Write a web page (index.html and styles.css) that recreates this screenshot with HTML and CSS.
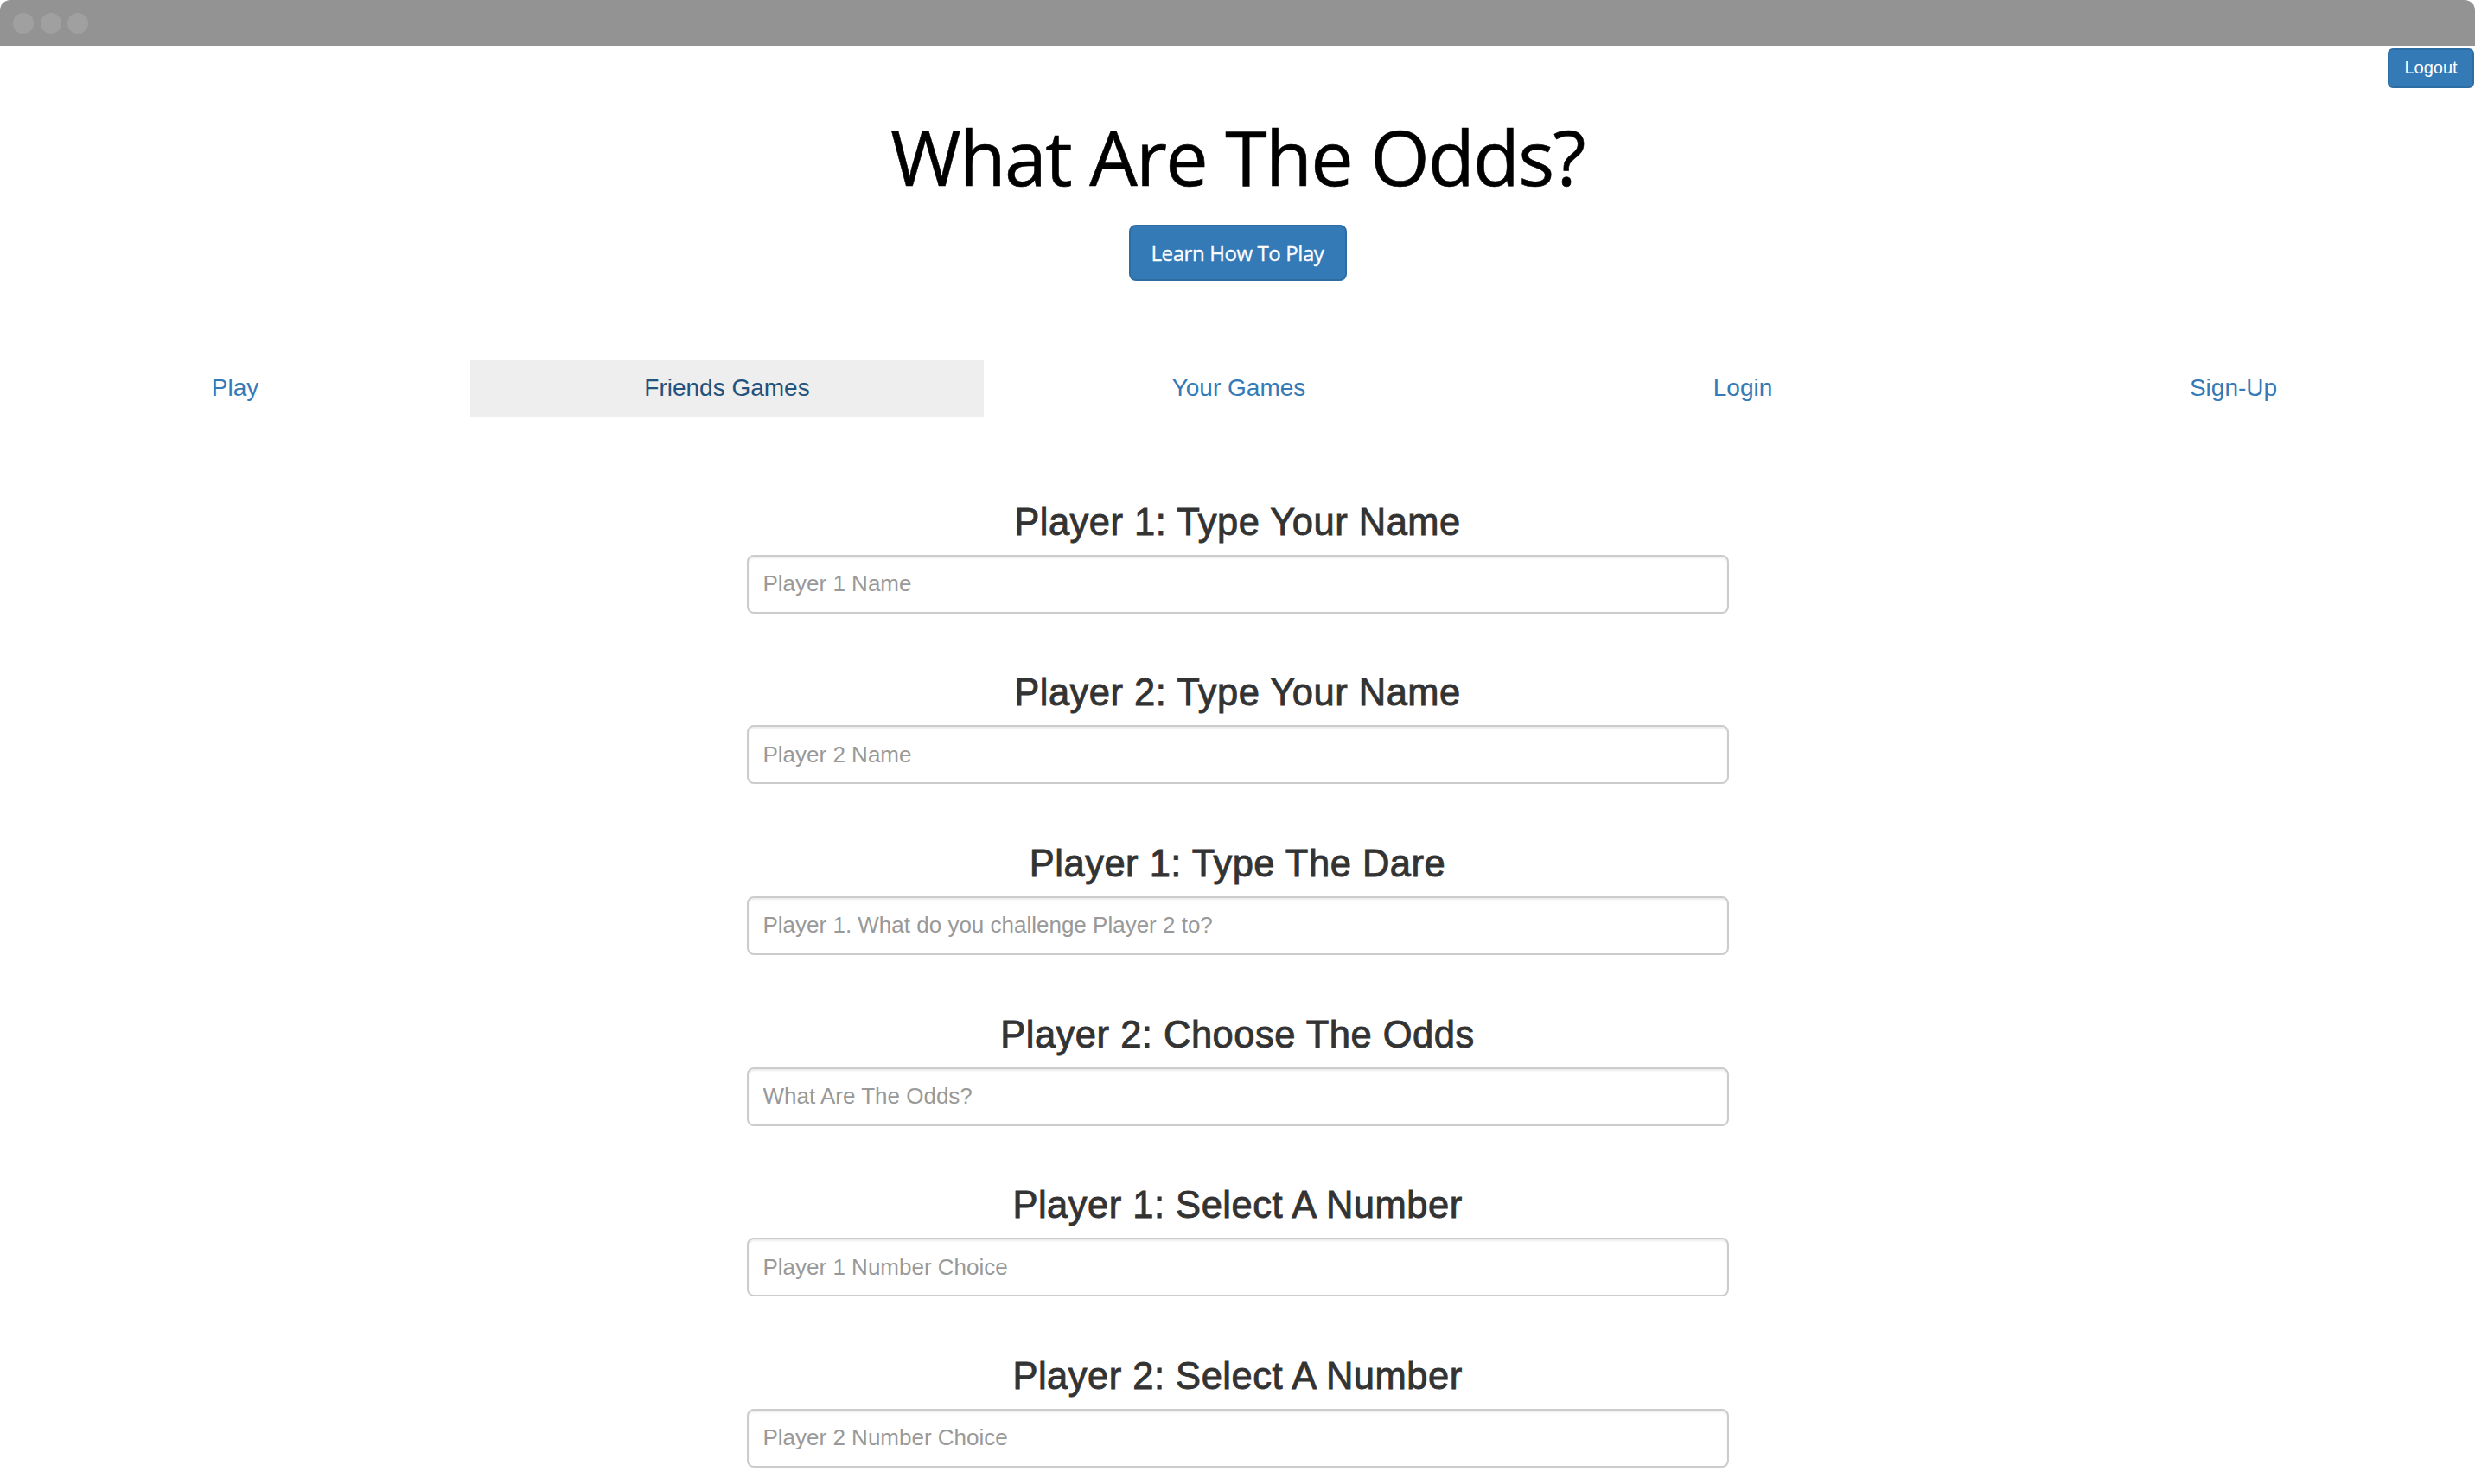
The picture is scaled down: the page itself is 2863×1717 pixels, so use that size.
FILE: index.html
```html
<!DOCTYPE html>
<html lang="en">
<head>
<meta charset="utf-8">
<title>What Are The Odds?</title>
<link rel="stylesheet" href="styles.css">
</head>
<body>
<div class="titlebar">
  <span class="dot"></span><span class="dot"></span><span class="dot"></span>
</div>
<div class="topbar">
  <button class="btn btn-logout" type="button">Logout</button>
</div>
<header class="hero">
  <h1 class="title">What Are The Odds?</h1>
  <button class="btn btn-learn" type="button">Learn How To Play</button>
</header>
<nav class="tabs">
  <a class="tab" href="#">Play</a>
  <a class="tab active" href="#">Friends Games</a>
  <a class="tab" href="#">Your Games</a>
  <a class="tab" href="#">Login</a>
  <a class="tab" href="#">Sign-Up</a>
</nav>
<form class="game-form">
  <div class="group">
    <h3 class="label">Player 1: Type Your Name</h3>
    <input class="field" type="text" placeholder="Player 1 Name">
  </div>
  <div class="group">
    <h3 class="label">Player 2: Type Your Name</h3>
    <input class="field" type="text" placeholder="Player 2 Name">
  </div>
  <div class="group">
    <h3 class="label">Player 1: Type The Dare</h3>
    <input class="field" type="text" placeholder="Player 1. What do you challenge Player 2 to?">
  </div>
  <div class="group">
    <h3 class="label">Player 2: Choose The Odds</h3>
    <input class="field" type="text" placeholder="What Are The Odds?">
  </div>
  <div class="group">
    <h3 class="label">Player 1: Select A Number</h3>
    <input class="field" type="text" placeholder="Player 1 Number Choice">
  </div>
  <div class="group">
    <h3 class="label">Player 2: Select A Number</h3>
    <input class="field" type="text" placeholder="Player 2 Number Choice">
  </div>
</form>
</body>
</html>
```
FILE: styles.css
```css
html, body {
  margin: 0;
  padding: 0;
  background: #fff;
}
body {
  font-family: "Liberation Sans", Arial, sans-serif;
  color: #333;
  overflow: hidden;
}
.titlebar {
  height: 53px;
  background: #939393;
  border-radius: 12px 12px 0 0;
  display: flex;
  align-items: center;
  gap: 7.5px;
  padding-left: 15px;
}
.dot {
  width: 24px;
  height: 24px;
  border-radius: 50%;
  background: #a0a0a0;
}
.topbar {
  display: flex;
  justify-content: flex-end;
  padding: 3px 1px 0 0;
}
.btn {
  border-style: solid;
  color: #fff;
  background: #337ab7;
  border-color: #2e6da4;
  cursor: pointer;
}
.btn-logout {
  box-sizing: border-box;
  width: 100px;
  height: 46px;
  border-width: 2px;
  border-radius: 6px;
  font-family: "Liberation Sans", Arial, sans-serif;
  font-size: 20px;
  padding: 0 0 2px;
}
.hero {
  display: flex;
  flex-direction: column;
  align-items: center;
}
.title {
  margin: 31px 0 0;
  font-family: "Open Sans", "Noto Sans", sans-serif;
  font-weight: 400;
  font-size: 88px;
  line-height: 1.1;
  letter-spacing: -1.7px;
  color: #000;
  -webkit-text-stroke: 0.6px #000;
}
.btn-learn {
  box-sizing: border-box;
  margin-top: 30px;
  height: 65px;
  width: 252px;
  border-width: 2px;
  border-radius: 8px;
  font-family: "Open Sans", "Noto Sans", sans-serif;
  font-size: 24px;
  letter-spacing: -0.4px;
  padding: 0;
  -webkit-text-stroke: 0.3px #fff;
}
.tabs {
  margin-top: 91px;
  display: grid;
  grid-template-columns: 544fr 594fr 590fr 576fr 559fr;
}
.tab {
  display: block;
  text-align: center;
  padding: 13px 0;
  line-height: 40px;
  font-size: 28px;
  color: #337ab7;
  text-decoration: none;
}
.tab.active {
  background: #eeeeee;
  color: #23527c;
}
.game-form {
  width: 1136px;
  margin: 99px auto 0;
  display: flex;
  flex-direction: column;
  gap: 68.6px;
}
.group {
  display: flex;
  flex-direction: column;
}
.label {
  margin: 0 0 15px;
  text-align: center;
  font-size: 43.5px;
  line-height: 46px;
  font-weight: 400;
  letter-spacing: 0.5px;
  color: #333;
  -webkit-text-stroke: 0.9px #333;
}
.field {
  box-sizing: border-box;
  width: 100%;
  height: 68px;
  border: 2px solid #cccccc;
  border-radius: 8px;
  padding: 0 17px;
  font-family: "Liberation Sans", Arial, sans-serif;
  font-size: 26px;
  color: #555;
  background: #fff;
  box-shadow: inset 0 2px 2px rgba(0, 0, 0, 0.075);
  outline: none;
}
.field::placeholder {
  color: #999;
}
```
